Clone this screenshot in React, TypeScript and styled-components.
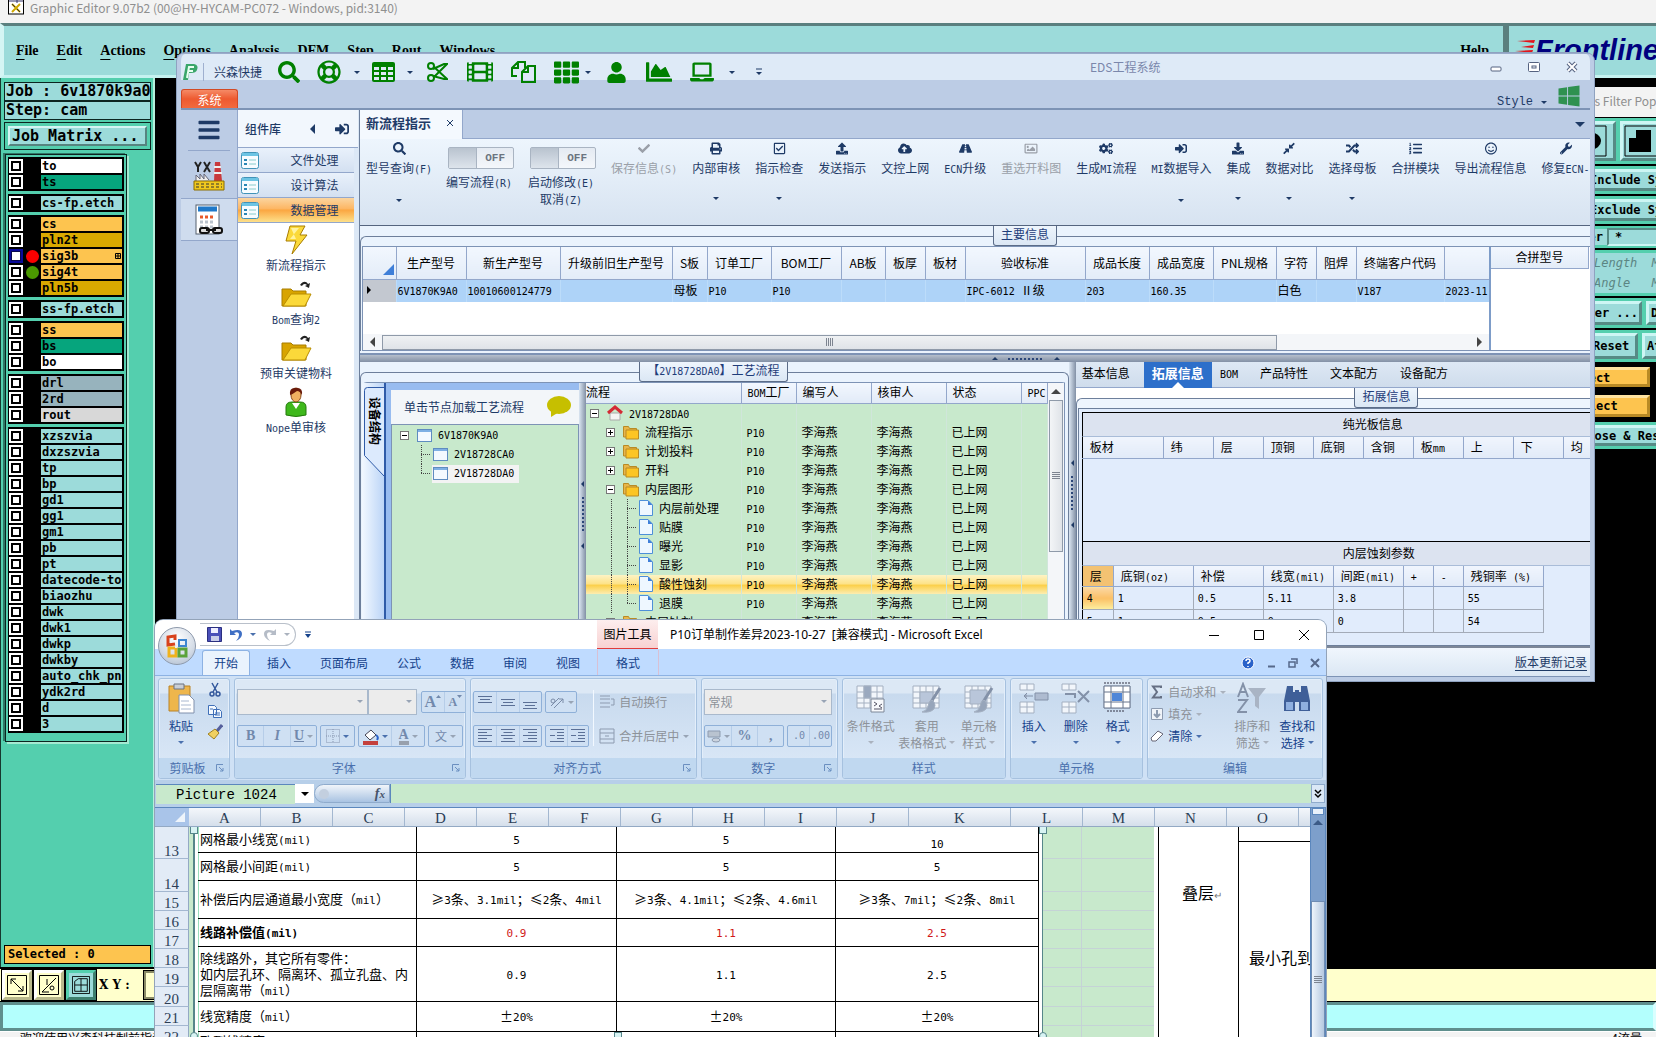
import React from 'react';
import styled, { createGlobalStyle, css } from 'styled-components';
import {
  FaSearch, FaRegLifeRing, FaFilm, FaTh, FaUser, FaChartArea, FaLaptop, FaCheck, FaPrint,
  FaRegCheckSquare, FaUpload, FaCloudUploadAlt, FaRoad, FaRegImage, FaCogs, FaSignInAlt, FaDownload,
  FaCompressAlt, FaRandom, FaListOl, FaRegSmile, FaWrench, FaWindows, FaBars,
} from 'react-icons/fa';

const GREEN = '#c8e9cc';
const NAVY = '#1e3a66';
const TEAL = '#9cdbda';
const CJK = '"Noto Sans CJK SC", sans-serif';
const MONO = '"DejaVu Sans Mono", "Liberation Mono", monospace';

const Global = createGlobalStyle`
  * { box-sizing: border-box; }
  html, body { margin: 0; padding: 0; background: #000; overflow: hidden; }
  body { font: 12px/18px ${CJK}; color: #000; }
  button, input, select { font: inherit; color: inherit; margin: 0; padding: 0; border: 0; background: none; border-radius: 0; }
  button { white-space: nowrap; }
  table { border-collapse: collapse; border-spacing: 0; table-layout: fixed; }
  th { font-weight: normal; }
  td, th { padding: 0; overflow: hidden; white-space: nowrap; }
  svg { display: block; flex: none; }
`;

/* ---------- shared pieces ---------- */

const Half = styled.span<{ $big?: boolean }>`
  font-family: ${MONO};
  font-size: ${p => (p.$big ? 11 : 10)}px;
  line-height: 1;
  white-space: pre;
`;

/* Latin runs are set at half the width of a Chinese character. */
const Mix = ({ t, big }: { t: string; big?: boolean }) => (
  <>{t.split(/([\x20-\x7e]+)/).filter(Boolean).map((s, i) =>
    /^[\x20-\x7e]+$/.test(s) ? <Half key={i} $big={big}>{s}</Half> : s)}</>
);

const Caret = styled.i<{ $c?: string; $dir?: 'up' | 'down' | 'left' | 'right'; $s?: number }>`
  display: block; flex: none; width: 0; height: 0;
  border: ${p => p.$s ?? 3}px solid transparent;
  ${p => {
    const c = p.$c ?? NAVY;
    switch (p.$dir) {
      case 'up': return `border-top: 0; border-bottom-color: ${c};`;
      case 'left': return `border-left: 0; border-right-color: ${c};`;
      case 'right': return `border-right: 0; border-left-color: ${c};`;
      default: return `border-bottom: 0; border-top-color: ${c};`;
    }
  }}
`;

const Desktop = styled.div`
  position: relative; height: 100vh; overflow: hidden; background: #000;
`;

/* ---------- graphic editor ---------- */

const Editor = styled.div`
  height: 100%; display: flex; flex-direction: column;
`;
const EditorTitle = styled.header`
  height: 23px; flex: none; display: flex; align-items: flex-start; gap: 6px; padding-left: 8px;
  background: #f3f3f3; color: #8f8f8f; font: 12px/16px ${CJK};
`;
const MenuRow = styled.div`
  height: 55px; flex: none; display: flex; background: #54cfae;
`;
const MenuBar = styled.nav`
  flex: 1; display: flex; align-items: center; gap: 18px; padding: 0 12px;
  background: ${TEAL}; border: 3px solid; border-color: #5a7f7e #5a7f7e #c5f2f0 #d5f5f4;
  border-left-width: 4px;
`;
const MenuItem = styled.button<{ $end?: boolean }>`
  font: bold 14px/20px "Liberation Serif", serif; ${p => p.$end && 'margin-left: auto; margin-right: 2px;'}
  &::first-letter { text-decoration: underline; text-underline-offset: 4px; }
`;
const Logo = styled.div`
  width: 150px; flex: none; display: flex; align-items: center; overflow: hidden; padding: 0 6px 2px;
  background: ${TEAL}; border: 3px solid; border-color: #5a7f7e #c5f2f0 #c5f2f0 #5a7f7e; border-right: 0;
  font: italic bold 29px/30px "Liberation Sans", sans-serif; color: #00007f;
`;
const EditorBody = styled.div`
  flex: 1; min-height: 0; display: flex;
`;
const LayerPane = styled.aside`
  width: 155px; flex: none; display: flex; flex-direction: column; padding: 4px 2px 3px 3px;
  background: #54cfae; border-right: 2px solid #b4f0dc; border-left: 1px solid #17382f;
`;
const InfoBox = styled.div`
  height: 19px; border: 1px solid #0c2420; background: ${TEAL}; padding-left: 1px; overflow: hidden;
  font: bold 15px/17px ${MONO}; white-space: pre;
`;
const MatrixFrame = styled.div`
  margin-top: 2px; height: 28px; padding: 3px; border: 1px solid #0c2420; background: #54cfae;
`;
const MatrixButton = styled.button`
  width: 100%; height: 20px; text-align: left; padding-left: 2px; background: ${TEAL};
  border: 2px solid; border-color: #d5f5f4 #56847f #56847f #d5f5f4; font: bold 15px/16px ${MONO};
`;
const LayerList = styled.div`
  width: 122px; height: 588px; margin: 4px 0 0 1px; padding: 2px; display: flex; flex-direction: column; gap: 3px;
  border: 1px solid #0c2420; box-shadow: 2px 2px 0 #a4ead2, -2px -1px 0 #2f7866;
`;
const LayerGroup = styled.div`
  background: #000; padding: 1px 2px 1px 1px;
`;
const Layer = styled.label<{ $bg: string }>`
  display: flex; align-items: center; height: 16px;
  span { margin-left: auto; width: 81px; height: 14px; padding-left: 1px; overflow: hidden; background: ${p => p.$bg};
    font: bold 12px/14px ${MONO}; white-space: nowrap; display: flex; align-items: center; justify-content: space-between; }
`;
const LayerTick = styled.input<{ $on?: boolean }>`
  appearance: none; width: 14px; height: 14px; background: #fff; flex: none;
  border: 2px solid ${p => (p.$on ? '#0a0a9a' : '#fff')}; box-shadow: inset 0 0 0 2px #000;
  ${p => p.$on && 'box-shadow: inset 0 0 0 1px #0a0a50;'}
`;
const Dot = styled.i<{ $c: string }>`
  width: 13px; height: 13px; margin-left: 3px; border-radius: 50%; background: ${p => p.$c};
`;
const Selected = styled.div`
  margin-top: auto; height: 19px; border: 1px solid #000; background: #fdc44f; padding-left: 3px;
  font: bold 12px/17px ${MONO}; white-space: pre;
`;
const ToolRow = styled.div`
  height: 35px; flex: none; display: flex; gap: 2px; padding: 1px 0 1px 2px; background: #ffffcc; border-top: 2px solid #000; border-bottom: 1px solid #000;
`;
const SquareButton = styled.button<{ $on?: boolean }>`
  width: 30px; height: 30px; display: grid; place-items: center; outline: 1px solid #000;
  background: ${p => (p.$on ? TEAL : '#ffffcc')};
  border: 3px solid; border-color: ${p => (p.$on ? '#54cfae #3e7f6e #3e7f6e #54cfae' : '#fff #b9b98c #b9b98c #fff')};
`;
const XY = styled.label`
  display: flex; align-items: center; gap: 14px; padding-left: 1px; font: bold 12px/16px "DejaVu Serif", serif; white-space: pre;
  input { width: 180px; height: 28px; background: #ffffcc; border: 2px solid #8a8a66; outline: 1px solid #000; }
`;
const StatusLine = styled.div`
  height: 29px; flex: none; background: #b3fffd; border: 3px solid; border-color: #5f8f8d #d9ffff #5f8f8d #5f8f8d;
`;
const Taskbar = styled.footer`
  height: 6px; flex: none; overflow: hidden; background: #f3f3f3; display: flex; justify-content: space-between;
  padding: 0 14px 0 20px; line-height: 12px; border-top: 1px solid #fff;
`;

const LAYER_GROUPS: [string, string][][] = [
  [['to', '#ffffff'], ['ts', '#06a57d']],
  [['cs-fp.etch', TEAL]],
  [['cs', '#fdc44f'], ['pln2t', '#d9a900'], ['sig3b', '#fdc44f'], ['sig4t', '#fdc44f'], ['pln5b', '#d9a900']],
  [['ss-fp.etch', TEAL]],
  [['ss', '#fdc44f'], ['bs', '#06a57d'], ['bo', '#ffffff']],
  [['drl', '#97b3bd'], ['2rd', '#97b3bd'], ['rout', '#d8d8d8']],
  ['xzszvia', 'dxzszvia', 'tp', 'bp', 'gd1', 'gg1', 'gm1', 'pb', 'pt', 'datecode-to', 'biaozhu', 'dwk', 'dwk1',
    'dwkp', 'dwkby', 'auto_chk_pnl', 'ydk2rd', 'd', '3'].map(n => [n, TEAL] as [string, string]),
];

const GraphicEditor = () => (
  <Editor>
    <EditorTitle>
      <svg width="16" height="15" viewBox="0 0 16 15"><rect x=".5" y="-2" width="15" height="16" fill="#fff" stroke="#000" /><path d="M1 1h14M9 0v3" stroke="#336" /><path d="M4 4l8 8M12 4l-8 8" stroke="#cfa800" strokeWidth="2" /><path d="M4 4l3 3M9 9l3 3" stroke="#333" /></svg>
      Graphic Editor 9.07b2 (00@HY-HYCAM-PC072 - Windows, pid:3140)
    </EditorTitle>
    <MenuRow>
      <MenuBar>
        {['File', 'Edit', 'Actions', 'Options', 'Analysis', 'DFM', 'Step', 'Rout', 'Windows'].map(m => <MenuItem key={m}>{m}</MenuItem>)}
        <MenuItem $end>Help</MenuItem>
      </MenuBar>
      <Logo>
        <svg width="20" height="24" viewBox="0 0 20 24"><path d="M2 3l18-1-1 3zM6 9l13-2-1 3zM0 13l18-1-1 3zM4 19l13-2-1 3z" fill="#e3141b" /></svg>
        Frontline
      </Logo>
    </MenuRow>
    <EditorBody>
      <LayerPane>
        <InfoBox>Job : 6v1870k9a0</InfoBox>
        <InfoBox>Step: cam</InfoBox>
        <MatrixFrame><MatrixButton>Job Matrix ...</MatrixButton></MatrixFrame>
        <LayerList>
          {LAYER_GROUPS.map((g, i) => (
            <LayerGroup key={i}>
              {g.map(([name, bg]) => (
                <Layer key={name} $bg={bg}>
                  <LayerTick type="checkbox" $on={name === 'sig3b'} />
                  {name === 'sig3b' && <Dot $c="#fb0000" />}
                  {name === 'sig4t' && <Dot $c="#4a9a00" />}
                  <span>{name}{name === 'sig3b' && <svg width="7" height="6" viewBox="0 0 7 6"><path d="M.5.5h5v5h-5zM3 0v6M0 3h6" fill="none" stroke="#000" /></svg>}</span>
                </Layer>
              ))}
            </LayerGroup>
          ))}
        </LayerList>
        <Selected>Selected : 0</Selected>
      </LayerPane>
    </EditorBody>
    <ToolRow>
      <SquareButton aria-label="Zoom"><svg width="20" height="20" viewBox="0 0 20 20" fill="none" stroke="#000"><path d="M.5.5h19v19H.5zM4 4l12 12M4 9V4h5M16 11v5h-5" /></svg></SquareButton>
      <SquareButton aria-label="Angle"><svg width="20" height="20" viewBox="0 0 20 20" fill="none" stroke="#000"><path d="M.5.5h19v19H.5zM3 17L17 3M8 4v6M3 17h7" /><circle cx="13" cy="13" r="2" /></svg></SquareButton>
      <SquareButton $on aria-label="Grid"><svg width="18" height="18" viewBox="0 0 20 20" fill="none" stroke="#000"><path d="M.5.5h19v19H.5zM3 6l4-3h10v14H3zM10 3v14M3 10h14" /></svg></SquareButton>
      <XY>X Y :<input /></XY>
    </ToolRow>
    <StatusLine />
    <Taskbar><span>欢迎使用兴森科技制前指示</span><span>4流量</span></Taskbar>
  </Editor>
);

/* ---------- filter popup ---------- */

const Popup = styled.section`
  position: absolute; right: -44px; top: 87px; width: 300px; background: #54cfae;
  display: flex; flex-direction: column; font: bold 12px/16px ${MONO};
`;
const PopupTitle = styled.header`
  height: 31px; padding-left: 152px; background: #f3f3f3; color: #8f8f8f; font: 12px/28px ${CJK}; border-bottom: 1px solid #000;
`;
const PopupRow = styled.div<{ $h: number; $dark?: boolean }>`
  height: ${p => p.$h}px; display: flex; gap: 4px; padding: 3px 0; border-bottom: 2px solid #000; white-space: nowrap;
  background: ${p => (p.$dark ? '#000' : '#54cfae')};
`;
const PopupButton = styled.button<{ $w?: number; $gold?: boolean; $pad?: number }>`
  ${p => (p.$w ? `width: ${p.$w}px; flex: none;` : 'flex: 1;')} text-align: left; padding-left: ${p => p.$pad ?? 0}px; overflow: hidden;
  background: ${p => (p.$gold ? '#fdc44f' : TEAL)};
  border: 3px solid; border-color: ${p => (p.$gold ? '#ffe3a0 #b98a25 #b98a25 #ffe3a0' : '#cdf6f4 #568a85 #568a85 #cdf6f4')};
`;
const PopupField = styled.label`
  flex: 1; display: flex; align-items: center; gap: 4px; background: ${TEAL}; padding-left: 174px;
  input { flex: 1; min-width: 0; height: 18px; border: 2px solid; border-color: #568a85 #cdf6f4 #cdf6f4 #568a85; padding-left: 6px; }
`;
const Disabled = styled.div`
  flex: 1; background: ${TEAL}; padding-left: 194px; font: italic 12px/20px ${MONO}; color: #5b8583; white-space: pre;
`;

const FilterPopup = () => (
  <Popup>
    <PopupTitle>Features Filter Popup</PopupTitle>
    <PopupRow $h={48}>
      <PopupButton $w={216} $pad={170} aria-label="Surface"><svg width="40" height="32" viewBox="0 0 40 32"><path d="M1 1h32v30H1z" fill="none" stroke="#000" /><ellipse cx="17" cy="16" rx="11" ry="9" /></svg></PopupButton>
      <PopupButton $pad={1} aria-label="Polygon"><svg width="34" height="32" viewBox="0 0 34 32"><path d="M1 1h32v30H1z" fill="none" stroke="#000" /><path d="M12 5h15v22H5V13h7z" /></svg></PopupButton>
    </PopupRow>
    <PopupRow $h={30}><PopupButton $pad={187}>Include Symbols</PopupButton></PopupRow>
    <PopupRow $h={30}><PopupButton $pad={187}>Exclude Symbols</PopupButton></PopupRow>
    <PopupRow $h={24}><PopupField>User<input defaultValue="*" /></PopupField></PopupRow>
    <PopupRow $h={48}><Disabled>{'Length  Min\nAngle   Min'}</Disabled></PopupRow>
    <PopupRow $h={32}><PopupButton $w={242} $pad={170}>Other ...</PopupButton><PopupButton $pad={2}>DCode</PopupButton></PopupRow>
    <PopupRow $h={34}><PopupButton $w={238} $pad={190}>Reset</PopupButton><PopupButton $pad={2}>Attr</PopupButton></PopupRow>
    <PopupRow $h={28} $dark><PopupButton $w={250} $gold $pad={164}>Select</PopupButton></PopupRow>
    <PopupRow $h={30} $dark><PopupButton $w={250} $gold $pad={157}>Unselect</PopupButton></PopupRow>
    <PopupRow $h={29}><PopupButton $pad={177}>Close &amp; Reset</PopupButton></PopupRow>
  </Popup>
);

/* ---------- EDS window ---------- */

const EdsWindow = styled.section`
  position: absolute; left: 177px; right: 62px; top: 53px; bottom: 356px; display: flex; flex-direction: column;
  background: #bccce5; border: 4px solid #bccce5; border-top: 1px solid #9aaccb; border-radius: 8px 8px 0 0; overflow: hidden;
  box-shadow: 0 0 0 1px #8fa2c0; color: ${NAVY};
`;
const EdsTitle = styled.header`
  height: 26px; flex: none; margin: 0 -4px; padding: 0 3px 0 4px; background: #deeaf7; display: flex; align-items: center; color: #008000;
`;
const QuickRow = styled.div`
  flex: none; align-self: flex-start; height: 36px; display: flex; align-items: center;
`;
const Brand = styled.span`
  margin: 0 12px 0 4px; padding-left: 10px; border-left: 1px solid #9fb0cf; color: ${NAVY};
`;
const QuickButton = styled.button<{ $w: number }>`
  width: ${p => p.$w}px; flex: none; display: grid; place-items: center; color: #008000;
`;
const AppName = styled.span`
  flex: 1; padding-left: 307px; color: #7a87ab; line-height: 18px; white-space: nowrap;
`;
const WinButton = styled.button`
  width: 38px; display: grid; place-items: center;
`;
const RibbonRow = styled.div`
  height: 30px; flex: none; display: flex; align-items: flex-end; border-bottom: 2px solid #7d93b5;
`;
const SystemTab = styled.button`
  width: 57px; height: 19px; color: #fff; background: linear-gradient(#f58a66, #ee5a30 50%, #f26a3e); border: 1px solid #d24a25; border-bottom: 0;
  border-radius: 3px 3px 0 0; line-height: 20px;
`;
const StyleButton = styled.button`
  margin-left: auto; display: flex; align-items: center; gap: 8px; margin-right: 10px; color: ${NAVY}; font: 12px/12px "Liberation Mono", monospace;
`;
const WindowsMark = styled(FaWindows)`
  margin-right: 9px; color: #2f9150;
`;
const EdsBody = styled.div`
  flex: 1; min-height: 0; display: flex;
`;
const NavRail = styled.nav`
  width: 57px; flex: none; display: flex; flex-direction: column; align-items: center; border-right: 1px solid #93a7cb;
`;
const RailButton = styled.button<{ $h: number; $on?: boolean }>`
  width: 100%; height: ${p => p.$h}px; display: grid; place-items: center; color: ${NAVY};
  ${p => p.$on && 'background: #cfdcee; border-top: 1px solid #93a7cb; border-bottom: 1px solid #93a7cb;'}
`;
const RailRule = styled.i`
  width: 42px; height: 1px; background: #93a7cb;
`;
const Library = styled.aside`
  width: 121px; flex: none; display: flex; flex-direction: column; background: #fff; border-right: 5px solid #dce8f6;
`;
const LibraryHead = styled.header`
  height: 38px; flex: none; margin-right: -4px; display: flex; align-items: center; padding: 0 4px 0 7px; gap: 20px; font-weight: 500; background: #f2f7fd;
  border-bottom: 1px solid #93a7cb; white-space: nowrap;
  span { margin-right: 9px; }
`;
const LibraryTab = styled.button<{ $on?: boolean }>`
  height: 25px; flex: none; display: flex; align-items: center; padding-left: 3px; border-bottom: 1px solid #93a7cb;
  background: ${p => (p.$on ? 'linear-gradient(#fbd5a0, #fdb663 45%, #fba641 50%, #fde08a)' : 'linear-gradient(#e9f1fb, #d3e0f1)')};
  span { flex: 1; padding-left: 16px; }
`;
const LibraryItem = styled.button`
  height: 54px; flex: none; display: flex; flex-direction: column; align-items: center; color: ${NAVY}; line-height: 18px; padding-top: 1px;
  svg { height: 32px; } span { line-height: 18px; }
`;
const Main = styled.main`
  flex: 1; min-width: 0; display: flex; flex-direction: column; border-left: 1px solid #6d7f9b;
`;
const DocTabs = styled.div`
  height: 29px; flex: none; display: flex; justify-content: space-between; align-items: center; padding-right: 5px; border-bottom: 1px solid #93a7cb;
`;
const DocTab = styled.div`
  width: 103px; height: 29px; display: flex; align-items: center; justify-content: space-between; padding: 0 8px 3px 6px; background: #f4f9fe;
  font-size: 13px; font-weight: bold; line-height: 20px; border-right: 1px solid #93a7cb;
`;
const Toolbar = styled.div`
  height: 87px; flex: none; display: flex; gap: 5px; padding-left: 1px; overflow: hidden; background: linear-gradient(#edf5fd, #d7e3f1);
  border-bottom: 1px solid #55657f;
`;
const Tool = styled.button<{ $off?: boolean }>`
  flex: none; display: flex; flex-direction: column; align-items: center; justify-content: flex-start; padding: 3px 5px 0; color: ${p => (p.$off ? '#9a9fa8' : NAVY)};
  svg { height: 13px; margin-bottom: 4px; } span { line-height: 18px; } i { margin-top: 20px; }
`;
const SwitchTool = styled.label`
  flex: none; display: flex; flex-direction: column; align-items: center; padding: 8px 5px 0 2px; line-height: 17px; text-align: center;
`;
const Switch = styled.span`
  position: relative; width: 66px; height: 22px; margin: 0 0 4px 4px; display: flex; align-items: center; justify-content: flex-end; padding-right: 8px;
  border: 1px solid #a9b4c2; border-radius: 2px; background: linear-gradient(#e4eaf2, #f4f7fb); color: #6c7480;
  font: bold 11px/18px "Liberation Mono", monospace;
  input { position: absolute; left: 0; top: 0; width: 28px; height: 20px; appearance: none; background: linear-gradient(#b9c3cf, #dde4ec); border-right: 1px solid #a9b4c2; }
`;
const Group = styled.fieldset`
  display: flex; flex-direction: column; min-width: 0; margin: 0; padding: 0 3px 0 1px; border: 1px solid #6d7f9b; border-radius: 6px 6px 0 0; border-bottom: 0;
`;
const OpenGroup = styled(Group)`
  border-right: 0; border-top-right-radius: 0; padding-right: 0;
`;
const GroupTitle = styled.legend<{ $at?: string }>`
  margin: 0 auto 0 ${p => p.$at ?? 'auto'}; height: 20px; padding: 0 7px; line-height: 16px; border: 1px solid #5b6c88; border-top: 0; border-radius: 0 0 3px 3px;
  background: linear-gradient(#eef5fd, #dbe7f4); color: #1f3d7a; white-space: nowrap;
`;
const InfoPane = styled.div`
  height: 129px; flex: none; background: #eaf3fd; border-bottom: 2px solid #7d93b5;
`;
const GridRow = styled.div`
  display: flex; height: 105px; border: 1px solid #7d93b5; border-right: 0;
`;
const GridMain = styled.div`
  flex: 1; min-width: 0; overflow: hidden; display: flex; flex-direction: column; background: #fff;
`;
const DataGrid = styled.table`
  width: 1126px; color: #000;
  th { height: 32px; text-align: center; background: linear-gradient(#f2f7fe, #e3ecf8); border: 1px solid #93a7cb; border-top: 0; border-left: 0; }
  td { height: 23px; padding: 0 0 1px 1px; background: #aed3f8; border-right: 1px solid #bcdcfa; }
  td:first-child { background: #c3c8d0; padding-left: 4px; }
`;
const Corner = styled.i`
  display: block; margin: 14px 2px 0 auto; width: 0; height: 0; border-left: 11px solid transparent; border-bottom: 11px solid #3f7fd8;
`;
const HScroll = styled.div`
  margin-top: auto; height: 16px; display: flex; align-items: center; padding: 0 7px; background: #f4f6f9;
  div { flex: 1; height: 15px; margin: 0 200px 0 7px; border: 1px solid #8f9aa9; background: linear-gradient(#eff1f3, #dfe3e8); display: grid; place-items: center; }
`;
const Grip = styled.i<{ $v?: boolean }>`
  width: 8px; height: 8px; background: repeating-linear-gradient(${p => (p.$v ? '180deg' : '90deg')}, #7d8490 0 1px, transparent 1px 2px);
`;
const SideGrid = styled.table`
  width: 98px; color: #000;
  th { height: 21px; background: linear-gradient(#f2f7fe, #e3ecf8); border-bottom: 1px solid #93a7cb; border-right: 1px solid #93a7cb; line-height: 20px; }
`;
const SideGridBox = styled.div`
  width: 101px; flex: none; background: #fff; border-left: 2px solid #7d9cc8;
`;
const HSplit = styled.div`
  height: 7px; flex: none; display: flex; align-items: center; justify-content: center; gap: 10px; padding-left: 102px; background: linear-gradient(#b5bfcc, #8290a5);
`;
const Dots = styled.i<{ $v?: boolean }>`
  ${p => (p.$v ? 'width: 2px; height: 36px;' : 'width: 36px; height: 2px;')}
  background: repeating-linear-gradient(${p => (p.$v ? '180deg' : '90deg')}, #2c4779 0 2px, transparent 2px 4px);
`;
const VSplit = styled.div`
  width: 7px; flex: none; display: flex; flex-direction: column; align-items: center; gap: 10px; padding-top: 98px;
  background: linear-gradient(90deg, #dbe6f2, #8290a5);
`;
const Lower = styled.div`
  flex: 1; min-height: 0; display: flex; overflow: hidden; background: #eaf3fd;
`;
const FlowGroup = styled(Group)`
  flex: 704; overflow: hidden; height: 290px;
`;
const FlowBody = styled.div`
  flex: 1; min-height: 0; display: flex; border: 1px solid #7d93b5; border-left: 0;
`;
const SideTabs = styled.div`
  position: relative; width: 22px; flex: none; background: linear-gradient(90deg, #f2f8ff, #bcd5f7);
  button { position: relative; writing-mode: vertical-rl; text-orientation: sideways; font-weight: bold; line-height: 18px; margin: 14px 0 0 4px; color: #000; }
  svg { position: absolute; left: 0; top: 0; }
`;
const DevicePane = styled.div`
  width: 195px; flex: none; display: flex; flex-direction: column; padding: 7px 0 0 5px; background: #98bcf0; border-left: 2px solid #2f5ba8;
`;
const DeviceHead = styled.div`
  height: 34px; flex: none; display: flex; align-items: center; justify-content: space-between; padding: 0 8px 0 13px; background: #f3f6f9;
`;
const DeviceTree = styled.div`
  flex: 1; border: 1px solid #7d93b5; background: ${GREEN}; padding: 1px 0 0 8px; color: #000;
`;
const TreeLine = styled.div`
  display: flex; align-items: center; height: 19px; white-space: nowrap;
`;
const TreeLabel = styled.span<{ $on?: boolean }>`
  display: flex; align-items: center; gap: 6px; height: 18px; padding: 0 5px 0 1px; ${p => p.$on && 'background: #f3f3f3;'}
`;
const Guide = styled.i<{ $k: 'none' | 'line' | 'elbow' | 'last' }>`
  width: 16px; height: 19px; flex: none;
  ${p => p.$k !== 'none' && css`
    background-image: repeating-linear-gradient(180deg, #444 0 1px, transparent 1px 2px)${p.$k !== 'line' ? ', repeating-linear-gradient(90deg, #444 0 1px, transparent 1px 2px)' : ''};
    background-size: 1px ${p.$k === 'last' ? '10px' : '19px'}, 10px 1px; background-position: 5px 0, 5px 9px; background-repeat: no-repeat;
  `}
`;
const Expander = styled.button`
  width: 16px; height: 19px; flex: none; display: flex; align-items: center;
`;
const FlowTree = styled.div`
  flex: 1; min-width: 0; overflow: hidden; background: ${GREEN};
`;
const FlowTable = styled.table`
  width: 100%; color: #000;
  th { height: 20px; text-align: left; padding: 0 0 2px 6px; line-height: 16px; background: linear-gradient(#f2f7fe, #e1eaf7); border-right: 1px solid #93a7cb; border-bottom: 1px solid #93a7cb; }
  th:first-child { padding-left: 0; }
  td { height: 19px; line-height: 18px; padding-left: 5px; border-right: 1px solid #d0e6da; }
  td:first-child { padding-left: 4px; }
`;
const FlowRow = styled.tr<{ $on?: boolean }>`
  ${p => p.$on && 'background: linear-gradient(#fdf3c4, #fde38a 45%, #fbd04c 55%, #fdedb0);'}
`;
const VScroll = styled.div`
  width: 16px; flex: none; display: flex; flex-direction: column; align-items: center; padding-top: 6px; background: #f4f6f9;
  div { width: 14px; height: 152px; margin-top: 6px; border: 1px solid #8f9aa9; background: linear-gradient(90deg, #f3f5f7, #dfe3e8); display: grid; place-items: center; }
`;
const DetailPane = styled.div`
  flex: 515; min-width: 0; display: flex; flex-direction: column; overflow: hidden; background: #fff;
`;
const DetailTabs = styled.div`
  height: 26px; flex: none; display: flex; background: linear-gradient(#dde8f4, #cfdcec); border-bottom: 1px solid #93a7cb;
`;
const DetailTab = styled.button<{ $on?: boolean; $gap?: number }>`
  position: relative; padding: 0 6px 4px; margin-left: ${p => p.$gap ?? 10}px; color: #000; height: 26px;
  ${p => p.$on && css`padding: 0 8px 4px; background: #2d6fca; color: #fff; font-weight: bold; font-size: 13px;
    &::after { content: ''; position: absolute; left: 50%; margin-left: -6px; bottom: 0; border: 6px solid transparent; border-top: 0; border-bottom-color: #fff; }`}
`;
const DetailGroup = styled(OpenGroup)`
  flex: 1; min-height: 0; background: #eef5fd;
`;
const Report = styled.div`
  flex: 1; min-height: 0; overflow: hidden; border: 1px solid #6d7f9b; border-right: 0; padding: 3px 0 0 3px; background: #e1ecfc;
`;
const ReportTable = styled.table<{ $w: number }>`
  width: ${p => p.$w}px; color: #000; border-left: 1px solid #000;
  th { height: 21px; text-align: left; padding-left: 7px; background: linear-gradient(#f0f5fd, #e1eaf8); border-right: 1px solid #93a7cb; border-bottom: 1px solid #93a7cb; line-height: 18px; }
  td { height: 23px; padding: 0 0 2px 4px; line-height: 18px; border-right: 1px solid #a3abb8; border-bottom: 1px solid #a3abb8; }
  th.key { background: #f3c272; } td.key { background: linear-gradient(#fbd7a4, #fbc066 50%, #fdf0a0); }
`;
const ReportTitle = styled.div`
  height: 25px; border-top: 1px solid #000; border-left: 1px solid #000; border-bottom: 1px solid #a9bcd8; background: #dce3f0; color: #000;
  padding-left: 260px; line-height: 22px;
`;
const ReportGap = styled.div`
  height: 82px; border-left: 1px solid #000;
`;
const EdsFooter = styled.footer`
  height: 31px; flex: none; display: flex; align-items: center; justify-content: flex-end; padding-right: 3px;
  background: linear-gradient(#f0f6fd, #dbe7f4); border-top: 2px solid #7d8798; border-bottom: 1px solid #7d93b5;
  a { color: ${NAVY}; text-underline-offset: 3px; }
`;

const COLS: [string, number, string][] = [
  ['生产型号', 70, '6V1870K9A0'], ['新生产型号', 94, '10010600124779'], ['升级前旧生产型号', 112, ''], ['S板', 35, '母板'], ['订单工厂', 64, 'P10'],
  ['BOM工厂', 70, 'P10'], ['AB板', 44, ''], ['板厚', 40, ''], ['板材', 40, ''], ['验收标准', 120, 'IPC-6012 Ⅱ级'], ['成品长度', 64, '203'],
  ['成品宽度', 64, '160.35'], ['PNL规格', 63, ''], ['字符', 40, '白色'], ['阻焊', 40, ''], ['终端客户代码', 88, 'V187'], ['', 45, '2023-11'],
];

const CopyIcon = () => (
  <svg width="25" height="24" viewBox="0 0 25 24" fill="none" stroke="#008000" strokeWidth="2"><path d="M6 16H1V8l6-6h7v6M7 2v6H1M11 22h13V6h-7l-6 6zM17 6v6h-6" /></svg>
);
const TableIcon = () => (
  <svg width="23" height="20" viewBox="0 0 23 20"><rect x="0" y="0" width="23" height="20" rx="2" fill="#008000" /><path d="M2 5h5v3H2zM9 5h5v3H9zM16 5h5v3h-5zM2 10h5v3H2zM9 10h5v3H9zM16 10h5v3h-5zM2 15h5v3H2zM9 15h5v3H9zM16 15h5v3h-5z" fill="#deeaf7" /></svg>
);
const ScissorsIcon = () => (
  <svg width="21" height="20" viewBox="0 0 21 20" fill="none" stroke="#008000" strokeWidth="2"><circle cx="4" cy="4" r="3" /><circle cx="4" cy="16" r="3" /><path d="M7 5l13 12h-3L6 14M7 15L20 2h-3L6 7" /></svg>
);

const QUICK: [string, number, React.ReactNode, boolean?][] = [
  ['搜索', 29, <FaSearch size={22} />], ['帮助', 51, <FaRegLifeRing size={24} />, true], ['表格', 47, <TableIcon />, true],
  ['剪切', 48, <ScissorsIcon />], ['影片', 38, <FaFilm size={26} />], ['复制', 48, <CopyIcon />], ['网格', 38, <FaTh size={25} />, true],
  ['用户', 51, <FaUser size={21} />], ['图表', 33, <FaChartArea size={26} />], ['电脑', 54, <FaLaptop size={24} />, true],
];

const TOOLS: { t: string; icon: React.ReactNode; caret?: boolean; off?: boolean }[] = [
  { t: '保存信息(S)', icon: <FaCheck size={12} />, off: true }, { t: '内部审核', icon: <FaPrint size={12} />, caret: true },
  { t: '指示检查', icon: <FaRegCheckSquare size={13} />, caret: true }, { t: '发送指示', icon: <FaUpload size={12} /> },
  { t: '文控上网', icon: <FaCloudUploadAlt size={14} /> }, { t: 'ECN升级', icon: <FaRoad size={13} /> },
  { t: '重选开料图', icon: <FaRegImage size={14} />, off: true }, { t: '生成MI流程', icon: <FaCogs size={14} /> },
  { t: 'MI数据导入', icon: <FaSignInAlt size={12} />, caret: true }, { t: '集成', icon: <FaDownload size={12} />, caret: true },
  { t: '数据对比', icon: <FaCompressAlt size={12} />, caret: true }, { t: '选择母板', icon: <FaRandom size={13} />, caret: true },
  { t: '合拼模块', icon: <FaListOl size={13} /> }, { t: '导出流程信息', icon: <FaRegSmile size={12} /> }, { t: '修复ECN-', icon: <FaWrench size={12} /> },
];

const FolderOpen = () => (
  <svg width="32" height="32" viewBox="0 0 32 32"><path d="M2 28V11h9l2 2h13v15z" fill="#d8a400" stroke="#a87c00" /><path d="M3 28l8-12h20l-6 12z" fill="#fbd93a" stroke="#b98d00" /><path d="M20 7c3-4 6-4 8-1l2-1-1 5-4-2 2-1c-2-2-4-1-5 1z" fill="#222" /></svg>
);
const Bolt = () => (
  <svg width="26" height="32" viewBox="0 0 26 32"><path d="M7 2h15l-5 9h7L9 30l4-13H3z" fill="#fbd93a" stroke="#a87c00" /><path d="M8 4h8L7 15h6" fill="#fff3a0" /></svg>
);
const Person = () => (
  <svg width="24" height="32" viewBox="0 0 24 32"><path d="M2 29v-8q0-5 6-5h8q6 0 6 5v8q-10 3-20 0z" fill="#3fb81c" stroke="#247a0c" /><path d="M8 17l4 6 4-6z" fill="#fff" /><ellipse cx="12" cy="9" rx="5" ry="7" fill="#f0b060" stroke="#8a4a1a" /><path d="M6 9Q5 1 12 2q7-1 6 7-2-4-5-4-4 3-7 4z" fill="#6a1a0a" /></svg>
);
const FormIcon = () => (
  <svg width="18" height="17" viewBox="0 0 18 17"><rect x=".5" y=".5" width="17" height="16" rx="2" fill="#f7fcff" stroke="#4193b8" /><path d="M1 2.500h16" stroke="#6cc4e4" strokeWidth="3" /><path d="M3 8h3M3 12h3" stroke="#2a86b4" strokeWidth="2" /><path d="M8 8h7M8 12h7" stroke="#8cc" /></svg>
);
const WindowIcon = () => (
  <svg width="15" height="13" viewBox="0 0 15 13"><rect x=".5" y=".5" width="14" height="12" fill="#f4f9ff" stroke="#5f8cc0" /><path d="M1 2h13" stroke="#7fb0e4" strokeWidth="2" /></svg>
);
const Folder = () => (
  <svg width="16" height="15" viewBox="0 0 16 15"><path d="M.5 12V1.500h5l1 2h7V12z" fill="#e8b64a" stroke="#b98a25" /><path d="M3 5h12.500v9H3z" fill="#fcc524" stroke="#b98a25" /></svg>
);
const Page = () => (
  <svg width="14" height="16" viewBox="0 0 14 16"><path d="M.5.5H9L13.500 5v10.500H.5z" fill="#eef7ff" stroke="#4d8fd8" /><path d="M9 .5V5h4.500z" fill="#3f7fd8" /></svg>
);
const House = () => (
  <svg width="16" height="16" viewBox="0 0 16 16"><path d="M3 8h10v7H3z" fill="#f4f4f4" stroke="#aaa" /><path d="M1 8l7-6 7 6" fill="none" stroke="#d42a34" strokeWidth="3" /></svg>
);
const Box = ({ plus }: { plus?: boolean }) => (
  <svg width="9" height="9" viewBox="0 0 9 9"><rect x=".5" y=".5" width="8" height="8" fill="#fff" stroke="#777" /><path d={plus ? 'M2 4.500h5M4.500 2v5' : 'M2 4.500h5'} stroke="#000" /></svg>
);
const Factory = () => (
  <svg width="32" height="32" viewBox="0 0 32 32"><path d="M2 3l3 5v5M8 3L5 8M11 3l6 10M17 3l-6 10" stroke="#222" strokeWidth="2" fill="none" /><path d="M21 22l1-19h5l2 19z" fill="#c9393c" /><path d="M21 8h7M21 14h8" stroke="#eee" strokeWidth="2" /><path d="M3 22v-6l4 4v-5l4 5v-5l5 6" stroke="#667" fill="#eee" /><path d="M1 22h30v9H1z" fill="#f0c81e" stroke="#8a6d00" /><path d="M3 25h26M3 28h26" stroke="#333" strokeDasharray="3 2" /></svg>
);
const Calculator = () => (
  <svg width="30" height="32" viewBox="0 0 30 32"><rect x="2" y="1" width="23" height="29" fill="#fff" stroke="#56606e" /><path d="M4 5h19" stroke="#1f78c8" strokeWidth="5" /><path d="M6 13h15" stroke="#e85a2a" strokeWidth="3" strokeDasharray="3 2" /><path d="M6 18h15M6 23h15" stroke="#b9c2cc" strokeWidth="3" strokeDasharray="3 2" /><g fill="#ddd" stroke="#111" strokeWidth="2"><rect x="6" y="24" width="9" height="5" rx="2" /><rect x="19" y="24" width="9" height="5" rx="2" /><path d="M12 26h10" /></g></svg>
);

const FLOW: [number, string, boolean?][] = [
  [0, '2V18728DA0'], [1, '流程指示', true], [1, '计划投料', true], [1, '开料', true], [1, '内层图形'],
  [2, '内层前处理'], [2, '贴膜'], [2, '曝光'], [2, '显影'], [2, '酸性蚀刻'], [2, '退膜'], [1, '内层蚀刻', true],
];

const Eds = () => (
  <EdsWindow>
    <EdsTitle>
      <QuickRow>
        <svg width="18" height="18" viewBox="0 0 18 18"><path d="M2 17L5 1h8q5 1 3 6-1 3-6 3H8l-1 7z" fill="#3aa66a" /><path d="M6 15L8 4h5M7 8h5" stroke="#e7fff0" strokeWidth="2" fill="none" /></svg>
        <Brand>兴森快捷</Brand>
        {QUICK.map(([name, w, icon, caret]) => (
          <React.Fragment key={name}>
            <QuickButton $w={w} aria-label={name}>{icon}</QuickButton>
            {caret && <Caret />}
          </React.Fragment>
        ))}
        <QuickButton $w={48} aria-label="更多"><svg width="8" height="8" viewBox="0 0 8 8"><path d="M1 1h6" stroke={NAVY} /><path d="M1 4h6L4 7z" fill={NAVY} /></svg></QuickButton>
      </QuickRow>
      <AppName>EDS工程系统</AppName>
      <WinButton aria-label="最小化"><svg width="12" height="12" viewBox="0 0 12 12"><rect x="1" y="6" width="10" height="4" rx="1" fill="#fff" stroke="#556280" /></svg></WinButton>
      <WinButton aria-label="最大化"><svg width="12" height="12" viewBox="0 0 12 12" fill="#fff" stroke="#556280"><rect x=".5" y="1.500" width="11" height="9" rx="1" /><rect x="4" y="5" width="4" height="2" /></svg></WinButton>
      <WinButton aria-label="关闭"><svg width="12" height="12" viewBox="0 0 12 12"><path d="M2 2l8 8M10 2l-8 8" stroke="#556280" strokeWidth="4" /><path d="M2 2l8 8M10 2l-8 8" stroke="#fff" strokeWidth="2" /></svg></WinButton>
    </EdsTitle>
    <RibbonRow>
      <SystemTab>系统</SystemTab>
      <StyleButton>Style<Caret /></StyleButton>
      <WindowsMark size={24} />
    </RibbonRow>
    <EdsBody>
      <NavRail>
        <RailButton $h={40} aria-label="菜单"><FaBars size={24} /></RailButton>
        <RailRule />
        <RailButton $h={47} aria-label="工厂"><Factory /></RailButton>
        <RailButton $h={43} $on aria-label="计算"><Calculator /></RailButton>
      </NavRail>
      <Library>
        <LibraryHead><span>组件库</span><Caret $dir="left" $s={5} /><FaSignInAlt size={14} /></LibraryHead>
        <LibraryTab><FormIcon /><span>文件处理</span></LibraryTab>
        <LibraryTab><FormIcon /><span>设计算法</span></LibraryTab>
        <LibraryTab $on><FormIcon /><span>数据管理</span></LibraryTab>
        <LibraryItem><Bolt /><span>新流程指示</span></LibraryItem>
        <LibraryItem><FolderOpen /><span><Mix t="Bom查询2" /></span></LibraryItem>
        <LibraryItem><FolderOpen /><span>预审关键物料</span></LibraryItem>
        <LibraryItem><Person /><span><Mix t="Nope单审核" /></span></LibraryItem>
      </Library>
      <Main>
        <DocTabs>
          <DocTab>新流程指示<svg width="8" height="8" viewBox="0 0 8 8"><path d="M1 1l6 6M7 1L1 7" stroke={NAVY} /></svg></DocTab>
          <Caret $s={5} />
        </DocTabs>
        <Toolbar>
          <Tool><FaSearch size={13} /><span><Mix t="型号查询(F)" /></span><Caret /></Tool>
          <SwitchTool><Switch><input type="checkbox" />OFF</Switch><span><Mix t="编写流程(R)" /></span></SwitchTool>
          <SwitchTool><Switch><input type="checkbox" />OFF</Switch><span><Mix t="启动修改(E)" /><br /><Mix t="取消(Z)" /></span></SwitchTool>
          {TOOLS.map(x => <Tool key={x.t} $off={x.off}>{x.icon}<span><Mix t={x.t} /></span>{x.caret && <Caret />}</Tool>)}
        </Toolbar>
        <InfoPane>
          <OpenGroup>
            <GroupTitle $at="calc(50% + 17px)">主要信息</GroupTitle>
            <GridRow>
              <GridMain>
                <DataGrid>
                  <colgroup><col style={{ width: 33 }} />{COLS.map((c, i) => <col key={i} style={{ width: c[1] }} />)}</colgroup>
                  <thead><tr><th><Corner /></th>{COLS.map((c, i) => <th key={i}>{c[0]}</th>)}</tr></thead>
                  <tbody><tr><td><Caret $dir="right" $c="#000" $s={4} /></td>{COLS.map((c, i) => <td key={i}><Mix t={c[2]} /></td>)}</tr></tbody>
                </DataGrid>
                <HScroll><Caret $dir="left" $c="#444" $s={5} /><div><Grip /></div><Caret $dir="right" $c="#444" $s={5} /></HScroll>
              </GridMain>
              <SideGridBox><SideGrid><thead><tr><th>合拼型号</th></tr></thead></SideGrid></SideGridBox>
            </GridRow>
          </OpenGroup>
        </InfoPane>
        <HSplit><Caret $dir="up" /><Dots /><Caret $dir="up" /></HSplit>
        <Lower>
          <FlowGroup>
            <GroupTitle><Mix t="【2V18728DA0】工艺流程" /></GroupTitle>
            <FlowBody>
              <SideTabs>
                <svg width="22" height="100" viewBox="0 0 22 100"><path d="M22 4.500H5.500q-3 0-3 3v65L22 93" fill="#dceafd" stroke="#2f5ba8" /></svg>
                <button>设备结构</button>
              </SideTabs>
              <DevicePane>
                <DeviceHead>单击节点加载工艺流程<svg width="24" height="22" viewBox="0 0 24 22"><ellipse cx="12" cy="9" rx="12" ry="9" fill="#c6bf00" /><path d="M4 12v9l8-5z" fill="#c6bf00" /></svg></DeviceHead>
                <DeviceTree>
                  <TreeLine><Expander aria-label="折叠"><Box /></Expander><TreeLabel><WindowIcon /><Half>6V1870K9A0</Half></TreeLabel></TreeLine>
                  <TreeLine><Guide $k="none" /><Guide $k="elbow" /><TreeLabel><WindowIcon /><Half>2V18728CA0</Half></TreeLabel></TreeLine>
                  <TreeLine><Guide $k="none" /><Guide $k="last" /><TreeLabel $on><WindowIcon /><Half>2V18728DA0</Half></TreeLabel></TreeLine>
                </DeviceTree>
              </DevicePane>
              <VSplit><Caret $dir="left" /><Dots $v /><Caret $dir="left" /></VSplit>
              <FlowTree>
                <FlowTable>
                  <colgroup><col style={{ width: 155 }} /><col style={{ width: 55 }} /><col style={{ width: 75 }} /><col style={{ width: 75 }} /><col style={{ width: 75 }} /><col /></colgroup>
                  <thead><tr><th>流程</th><th><Mix t="BOM工厂" /></th><th>编写人</th><th>核审人</th><th>状态</th><th><Half>PPC</Half></th></tr></thead>
                  <tbody>
                    {FLOW.map(([lv, t, plus], i) => (
                      <FlowRow key={t} $on={t === '酸性蚀刻'}>
                        <td>
                          <TreeLine>
                            {lv > 0 && <Guide $k="none" />}
                            {lv === 2 ? <><Guide $k="line" /><Guide $k={i === 10 ? 'last' : 'elbow'} /></> : <Expander aria-label="展开"><Box plus={plus} /></Expander>}
                            <TreeLabel>{lv === 0 ? <House /> : lv === 1 ? <Folder /> : <Page />}<span><Mix t={t} /></span></TreeLabel>
                          </TreeLine>
                        </td>
                        <td>{lv > 0 && <Half>P10</Half>}</td><td>{lv > 0 && '李海燕'}</td><td>{lv > 0 && '李海燕'}</td><td>{lv > 0 && '已上网'}</td><td />
                      </FlowRow>
                    ))}
                  </tbody>
                </FlowTable>
              </FlowTree>
              <VScroll><Caret $dir="up" $c="#444" $s={5} /><div><Grip $v /></div></VScroll>
            </FlowBody>
          </FlowGroup>
          <VSplit><Caret $dir="left" /><Dots $v /><Caret $dir="left" /></VSplit>
          <DetailPane>
            <DetailTabs>
              <DetailTab $gap={0}>基本信息</DetailTab><DetailTab $on $gap={8}>拓展信息</DetailTab><DetailTab $gap={2}><Half>BOM</Half></DetailTab>
              <DetailTab>产品特性</DetailTab><DetailTab>文本配方</DetailTab><DetailTab>设备配方</DetailTab>
            </DetailTabs>
            <DetailGroup>
              <GroupTitle $at="54%">拓展信息</GroupTitle>
              <Report>
                <ReportTitle>纯光板信息</ReportTitle>
                <ReportTable $w={531}>
                  <colgroup>{[81, 50, 50, 50, 50, 50, 50, 50, 50, 50].map((w, i) => <col key={i} style={{ width: w }} />)}</colgroup>
                  <thead><tr>{['板材', '纬', '层', '顶铜', '底铜', '含铜', '板mm', '上', '下', '均'].map(h => <th key={h}><Mix t={h} /></th>)}</tr></thead>
                </ReportTable>
                <ReportGap />
                <ReportTitle>内层蚀刻参数</ReportTitle>
                <ReportTable $w={461}>
                  <colgroup>{[31, 80, 70, 70, 70, 30, 30, 80].map((w, i) => <col key={i} style={{ width: w }} />)}</colgroup>
                  <thead><tr>{['层', '底铜(oz)', '补偿', '线宽(mil)', '间距(mil)', '+', '-', '残铜率 (%)'].map((h, i) => <th key={h} className={i ? '' : 'key'}><Mix t={h} /></th>)}</tr></thead>
                  <tbody>
                    <tr>{['4', '1', '0.5', '5.11', '3.8', '', '', '55'].map((v, i) => <td key={i} className={i ? '' : 'key'}><Half>{v}</Half></td>)}</tr>
                    <tr>{['5', '1', '0.5', '0', '0', '', '', '54'].map((v, i) => <td key={i}><Half>{v}</Half></td>)}</tr>
                  </tbody>
                </ReportTable>
              </Report>
            </DetailGroup>
          </DetailPane>
        </Lower>
        <EdsFooter><a href="#log">版本更新记录</a></EdsFooter>
      </Main>
    </EdsBody>
  </EdsWindow>
);

/* ---------- Excel ---------- */

const INK = '#15428b';
const ExcelWindow = styled.section`
  position: absolute; left: 155px; right: 330px; top: 620px; bottom: 0; display: flex; flex-direction: column; background: #c3d9f1;
  border-radius: 8px 8px 0 0; overflow: hidden; box-shadow: 0 0 0 1px #93a3b8;
`;
const ExcelTitle = styled.header`
  height: 29px; flex: none; display: flex; align-items: center; padding-left: 45px; background: #fff;
`;
const QuickBar = styled.div`
  width: 96px; height: 23px; display: flex; align-items: center; gap: 7px; padding-left: 7px; border: 1px solid #b9c0ca; border-left: 0; border-radius: 0 12px 12px 0;
  button { display: block; }
`;
const More = styled.button`
  margin-left: 8px; width: 12px;
`;
const Contextual = styled.div`
  width: 61px; height: 29px; margin-left: 281px; text-align: center; line-height: 28px; background: linear-gradient(#fdeeee, #f8d2d2); border-bottom: 1px solid #e03c3c;
`;
const DocName = styled.h1`
  margin: 0 auto 0 12px; font: 12px/18px "DejaVu Sans", ${CJK}; font-family: "Noto Sans", ${CJK}; white-space: pre;
`;
const SysButton = styled.button`
  width: 45px; display: grid; place-items: center; height: 29px;
`;
const Orb = styled.button`
  position: absolute; left: 3px; top: 7px; width: 38px; height: 38px; border-radius: 50%; display: grid; place-items: center; border: 1px solid #8d99ab;
  background: radial-gradient(circle at 50% 30%, #fff, #d3dbe6 60%, #aab9cc);
`;
const ExcelTabs = styled.nav`
  height: 27px; flex: none; display: flex; align-items: flex-end; padding: 0 6px 0 47px; background: #bfdbff; color: ${INK}; border-bottom: 1px solid #8db2e3;
`;
const ExcelTab = styled.button<{ $on?: boolean }>`
  height: 25px; padding: 0 12px; margin-right: 5px; line-height: 22px; border-radius: 3px 3px 0 0;
  ${p => p.$on && 'background: #eaf3fd; border: 1px solid #8db2e3; border-bottom: 0; padding: 0 11px;'}
`;
const ContextTab = styled(ExcelTab)`
  padding: 0 18px; border-left: 1px solid #d8c0d4; border-right: 1px solid #d8c0d4; border-radius: 0;
`;
const TabTools = styled.div`
  margin-left: auto; height: 25px; display: flex; align-items: center; gap: 12px;
`;
const Ribbon = styled.div`
  height: 104px; flex: none; display: flex; gap: 4px; padding: 2px 3px 1px; background: #cfe1f5; color: ${INK};
`;
const RibbonGroup = styled.section<{ $w: number }>`
  flex: ${p => p.$w} 1 0; min-width: 0; display: flex; flex-direction: column; border: 1px solid #a6c1df; border-radius: 3px; overflow: hidden;
  background: linear-gradient(#dce8f5 0 14px, #c8daee 15px, #d8e6f6 80px); box-shadow: inset 0 0 0 1px #e3eefa;
`;
const GroupBody = styled.div<{ $gap?: number }>`
  flex: 1; min-height: 0; display: flex; padding: 3px 3px 0 2px; gap: ${p => p.$gap ?? 0}px;
`;
const GroupName = styled.footer`
  height: 20px; flex: none; display: flex; align-items: center; background: #c0d8f0; color: #4a70ad;
  span { flex: 1; text-align: center; } svg { margin-right: 5px; }
`;
const BigButton = styled.button<{ $off?: boolean; $w: number }>`
  width: ${p => p.$w}px; flex: none; display: flex; flex-direction: column; align-items: center; color: ${p => (p.$off ? '#8d9299' : INK)}; line-height: 17px;
  svg { width: 30px; height: 32px; margin-bottom: 3px; }
`;
const Words = styled.span`
  display: flex; align-items: center; gap: 3px;
`;
const DropGap = styled.span`
  height: 17px; display: grid; place-items: center;
`;
const MiniColumn = styled.div<{ $gap: number }>`
  display: flex; flex-direction: column; gap: ${p => p.$gap}px;
`;
const LineStack = styled.div`
  display: flex; flex-direction: column; gap: 8px; padding-top: 7px;
`;
const Line = styled.div`
  display: flex; gap: 3px; height: 26px; align-items: center;
`;
const Cluster = styled.div<{ $w: number }>`
  width: ${p => p.$w}px; height: 22px; flex: none; display: flex; align-items: center; border: 1px solid #8fb0d8; border-radius: 2px; background: #cfe0f3; color: #7289ac;
  button { flex: 1; height: 20px; display: flex; align-items: center; justify-content: center; gap: 3px; border-right: 1px solid #b6cde8; }
  button:last-child { border-right: 0; }
`;
const SizeButton = styled.button`
  svg { align-self: flex-start; margin: 3px 0 0 -3px; }
`;
const Glyph = styled.b<{ $s?: string }>`
  font: bold 14px/20px "Liberation Serif", serif; ${p => p.$s}
`;
const Picker = styled.label<{ $w: number }>`
  position: relative; width: ${p => p.$w}px; height: 26px; flex: none; border: 1px solid #a9b9cc; background: #ececec; color: #8d9299; margin-right: -3px;
  select { width: 100%; height: 24px; appearance: none; padding-left: 3px; }
  i { position: absolute; right: 4px; top: 10px; }
  & + div { margin-left: 4px; }
`;
const Rule = styled.i`
  width: 1px; height: 56px; background: #f2f8ff; margin: 8px 5px 0 4px; flex: none;
`;
const TextButton = styled.button<{ $off?: boolean }>`
  display: flex; align-items: center; gap: 4px; height: 20px; color: ${p => (p.$off ? '#8d9299' : INK)};
`;
const FormulaBar = styled.div`
  height: 28px; flex: none; display: flex; padding: 4px 1px; background: #b7cfe9; border-bottom: 1px solid #5b87bd;
`;
const NameBox = styled.input`
  width: 139px; height: 20px; background: ${GREEN}; padding-left: 20px; font: 14px/20px "Liberation Mono", monospace; border-top: 1px solid #5b87bd;
`;
const NameDrop = styled.button`
  width: 19px; background: #fff; display: grid; place-items: center;
`;
const FxPill = styled.button`
  width: 76px; border-radius: 10px 0 0 10px; background: linear-gradient(#f1f5fa, #a9c3e2); display: flex; align-items: center; justify-content: space-between; padding: 0 4px;
  border: 1px solid #8fabcc; font: italic bold 14px/18px "Liberation Serif", serif; color: #47536a;
  i { width: 10px; height: 10px; border-radius: 50%; background: #c3cfdf; } small { font-size: 11px; }
`;
const FormulaInput = styled.input`
  flex: 1; background: ${GREEN}; border-left: 1px solid #5b87bd;
`;
const ExpandButton = styled.button`
  width: 14px; background: #dbe8f6; border: 1px solid #8fabcc; display: grid; place-items: center;
`;
const Sheet = styled.div`
  flex: 1; min-height: 0; display: flex; overflow: hidden;
`;
const SheetMain = styled.div`
  flex: 1; min-width: 0; display: flex; flex-direction: column; overflow: hidden;
`;
const ColHeads = styled.div`
  height: 19px; flex: none; display: flex; background: linear-gradient(#f4f7fb, #d5dfeb); border-bottom: 1px solid #93a9c4; font: 15px/20px "Liberation Serif", serif; color: #2c3e56;
`;
const ColHead = styled.div<{ $w: number }>`
  width: ${p => p.$w}px; flex: none; text-align: center; border-right: 1px solid #a3b7d0;
`;
const SelectAll = styled.button`
  width: 34px; flex: none; background: #a9c4e9; display: flex; justify-content: flex-end; align-items: flex-end; padding: 4px;
  i { border-left: 10px solid transparent; border-bottom: 10px solid #eef4fb; }
`;
const SheetBody = styled.div`
  position: relative; flex: 1; min-height: 0; display: flex; overflow: hidden; background: ${GREEN};
`;
const RowHeads = styled.div`
  width: 34px; flex: none; background: #e2ebf6;
`;
const RowHead = styled.div<{ $h: number }>`
  height: ${p => p.$h}px; display: flex; align-items: flex-end; justify-content: center; border-bottom: 1px solid #a3b7d0; border-right: 1px solid #93a9c4;
  font: 15px/14px "Liberation Serif", serif; color: #2c3e56; overflow: hidden;
`;
const Picture = styled.div`
  flex: none; margin-left: 4px; width: 850px; padding: 0 5px 0 3px; background: #fff; border: solid #56868a; border-width: 0 1px 0 2px;
`;
const PicTable = styled.table`
  width: 840px; font-size: 13px; line-height: 16px;
  td { border: 1px solid #000; border-top: 0; text-align: center; white-space: normal; }
  td:first-child { text-align: left; padding-left: 1px; border-left: 1px solid #9db; }
`;
const PicRow = styled.tr<{ $h: number; $tone?: boolean; $low?: boolean }>`
  height: ${p => p.$h}px; ${p => p.$tone && 'color: #d01818;'}
  td:first-child { color: #000; ${p => p.$tone && 'font-weight: bold;'} }
  ${p => p.$low && 'td:last-child { padding-top: 8px; }'}
`;
const GreenCells = styled.div`
  width: 111px; flex: none; display: flex; flex-direction: column;
`;
const GreenRow = styled.div<{ $h: number }>`
  height: ${p => p.$h}px; flex: none; border-bottom: 1px solid #c5d3d6; display: flex;
  &::before { content: ''; width: 38px; border-right: 1px solid #c5d3d6; }
`;
const SidePicture = styled.div`
  flex: 1; display: flex; background: #fff; padding-left: 4px; font-size: 16px; line-height: 24px; white-space: nowrap;
`;
const StackCell = styled.div`
  width: 81px; flex: none; border: solid #000; border-width: 0 1px; text-align: center; padding: 53px 0 0 7px;
  small { font-size: 10px; color: #777; }
`;
const HoleCell = styled.div`
  flex: 1; min-width: 0; overflow: hidden; padding-left: 10px;
  &::before { content: ''; display: block; height: 14px; margin: 0 0 103px -10px; border-bottom: 1px solid #000; }
`;
const Handle = styled.i<{ $x: number; $y: number; $round?: boolean }>`
  position: absolute; left: ${p => p.$x}px; top: ${p => p.$y}px; width: 8px; height: 8px; background: #d8f3f3; border: 1px solid #56868a; ${p => p.$round && 'border-radius: 50%;'}
`;
const SheetScroll = styled.div`
  width: 16px; flex: none; display: flex; flex-direction: column; align-items: center; background: #7d9fcb; border: solid #5b87bd; border-width: 0 1px;
`;
const SplitBox = styled.div`
  width: 12px; height: 7px; background: #e8f1fb; border: 1px solid #5b87bd; margin-bottom: 5px;
`;
const SheetThumb = styled.div`
  width: 14px; flex: 1; margin-top: 76px; background: linear-gradient(90deg, #eef4fb, #b5c8e0); border: 1px solid #6f8cb3; border-bottom: 0; padding: 74px 2px 0;
  i { display: block; }
`;

const G = '#8d9bb0';
const lines = (ws: number[], y: number, x: 'l' | 'c' | 'r' = 'l') =>
  ws.map((w, i) => { const s = x === 'l' ? 0 : x === 'c' ? (14 - w) / 2 : 14 - w; return `M${s} ${y + i * 3}h${w}`; }).join('');
const LinesIcon = ({ d }: { d: string }) => <svg width="14" height="14" viewBox="0 0 14 14"><path d={d} stroke="#5b7096" /></svg>;
const Launcher = () => <svg width="8" height="8" viewBox="0 0 8 8"><path d="M7 .5H.5V7M3 3l4 4M7 4v3H4" stroke="#6b8fc0" fill="none" /></svg>;
const SheetIcon = ({ k }: { k: 'cond' | 'brush' | 'cell' | 'ins' | 'del' | 'fmt' }) => (
  <svg viewBox="0 0 30 32" fill="none" stroke="#a4b0c1">
    {(k === 'ins' || k === 'del') ? (
      <><path d="M1 2h14v6H1zM8 2v6M1 20h14v11H1zM8 20v11M1 25h14" fill="#f2f6fb" />{k === 'ins' ? <path d="M16 11h13v7H16zM5 14h9M8 11l-3 3 3 3" fill="#aebbd0" stroke="#8391a8" /> : <path d="M17 9l11 11M28 9L17 20M4 12h10v4" stroke="#8391a8" strokeWidth="2" />}</>
    ) : (
      <><path d="M1 4h26v22H1zM1 10h26M1 16h26M1 21h26M8 4v22M14 4v22M21 4v22" fill="#f2f6fb" />
        {k === 'cond' && <><path d="M8 4h7v12H8z" fill="#9aa9bf" /><path d="M15 17h13v13H15z" fill="#f7f9fc" stroke="#7c8798" /><path d="M18 20l3 2-3 2M26 22l-3 2 3 2M18 27h8" stroke="#556" /></>}
        {(k === 'brush' || k === 'cell') && <><path d={k === 'cell' ? 'M6 8h17v14H6z' : 'M8 10h13v11H8z'} fill="#b9c6da" /><path d="M28 6l-9 14" stroke="#8391a8" strokeWidth="3" /><path d="M20 18q-3 0-4 6-1 5-6 6 8 1 12-3 2-4 0-7z" fill="#97a5ba" /></>}
        {k === 'fmt' && <><path d="M1 4h26v22H1zM1 10h26M1 20h26M8 4v22M20 4v22" fill="#fff" stroke="#66748c" /><path d="M9 11h10v8H9z" fill="#4f86d8" stroke="none" /><path d="M1 1h26M4 29h18" stroke="#334" strokeDasharray="2 1" /></>}</>
    )}
  </svg>
);
const ROW_H = [32, 33, 19, 19, 19, 19, 19, 20, 19, 19];

const Excel = () => (
  <ExcelWindow>
    <ExcelTitle>
      <QuickBar>
        <button aria-label="保存"><svg width="15" height="15" viewBox="0 0 15 15"><path d="M.5.5h14v14H.5z" fill="#4a4fb8" stroke="#2a2f80" /><path d="M4 1h7v5H4z" fill="#eef" /><path d="M4 9h8v5H4z" fill="#c9cde8" /></svg></button>
        <button aria-label="撤销"><svg width="14" height="14" viewBox="0 0 14 14"><path d="M1 1v6h6L5 5q5-2 5 2 0 3-3 6 6-3 6-7 0-6-10-3z" fill="#3f6fc4" /></svg></button>
        <Caret $c="#4a70ad" />
        <button aria-label="重做"><svg width="14" height="14" viewBox="0 0 14 14"><path d="M13 1v6H7l2-2Q4 3 4 7q0 3 3 6-6-3-6-7 0-6 10-3z" fill="#b5bcc7" /></svg></button>
        <Caret $c="#aab2be" />
      </QuickBar>
      <More aria-label="更多"><svg width="8" height="8" viewBox="0 0 8 8"><path d="M1 1h6" stroke={INK} /><path d="M1 3h6L4 7z" fill={INK} /></svg></More>
      <Contextual>图片工具</Contextual>
      <DocName>{'P10订单制作差异2023-10-27  [兼容模式] - Microsoft Excel'}</DocName>
      <SysButton aria-label="最小化"><svg width="12" height="12" viewBox="0 0 12 12"><path d="M1 6.500h10" stroke="#000" /></svg></SysButton>
      <SysButton aria-label="最大化"><svg width="12" height="12" viewBox="0 0 12 12"><path d="M1.500 1.500h9v9h-9z" fill="none" stroke="#000" /></svg></SysButton>
      <SysButton aria-label="关闭"><svg width="12" height="12" viewBox="0 0 12 12"><path d="M1 1l10 10M11 1L1 11" stroke="#000" /></svg></SysButton>
    </ExcelTitle>
    <ExcelTabs>
      <ExcelTab $on>开始</ExcelTab>
      {['插入', '页面布局', '公式', '数据', '审阅', '视图'].map(t => <ExcelTab key={t}>{t}</ExcelTab>)}
      <ContextTab>格式</ContextTab>
      <TabTools>
        <button aria-label="帮助"><svg width="14" height="14" viewBox="0 0 14 14"><circle cx="7" cy="7" r="6" fill="#2a62c9" stroke="#fff" /><path d="M5 5q0-2 2-2t2 2q0 1-2 2v1M7 10v1" stroke="#fff" strokeWidth="1.500" fill="none" /></svg></button>
        <svg width="9" height="10" viewBox="0 0 9 10"><path d="M1 8.500h7" stroke="#56688a" strokeWidth="2" /></svg>
        <svg width="10" height="10" viewBox="0 0 10 10"><path d="M3 1h6v5M1 4h6v5H1z" stroke="#56688a" fill="none" strokeWidth="1.500" /></svg>
        <svg width="10" height="10" viewBox="0 0 10 10"><path d="M1 1l8 8M9 1L1 9" stroke="#56688a" strokeWidth="2" /></svg>
      </TabTools>
    </ExcelTabs>
    <Orb aria-label="Office"><svg width="26" height="26" viewBox="0 0 26 26" fill="none" strokeWidth="3"><path d="M11 7V3L4 4v8l7-1" stroke="#d8421c" /><path d="M15 7h7v6h-7z" stroke="#3f86d0" strokeWidth="2" /><path d="M11 15H5v8h7v-8" stroke="#f0b21c" /><path d="M15 16h7v7h-7z" stroke="#5aa33a" /></svg></Orb>
    <Ribbon>
      <RibbonGroup $w={71}>
        <GroupBody $gap={6}>
          <BigButton $w={40}><svg viewBox="0 0 30 32"><path d="M3 4h21v25H3z" fill="#eeb64c" stroke="#b98225" /><path d="M8 2h10v5H8z" fill="#c9ced6" stroke="#6a7280" /><path d="M13 13h10l5 5v13H13z" fill="#fff" stroke="#8090ac" /><path d="M15 19h8M15 23h10M15 27h10" stroke="#a9b8d0" /></svg>粘贴<DropGap><Caret $c="#4a70ad" /></DropGap></BigButton>
          <MiniColumn $gap={5}>
            <button aria-label="剪切"><svg width="16" height="16" viewBox="0 0 16 16" fill="none" stroke="#33589c" strokeWidth="1.500"><path d="M5 1l5 9M11 1L6 10" /><circle cx="5" cy="12" r="2" /><circle cx="11" cy="12" r="2" /></svg></button>
            <button aria-label="复制"><svg width="16" height="16" viewBox="0 0 16 16" fill="#f4f9ff" stroke="#3f6fb8"><path d="M1.500 2.500h6l2 2v7h-8zM6.500 6.500h6l2 2v6h-8z" /><path d="M8 10h5M8 12h5M3 6h3" /></svg></button>
            <button aria-label="格式刷"><svg width="16" height="16" viewBox="0 0 16 16"><path d="M15 1l-5 6" stroke="#555f9c" strokeWidth="3" /><path d="M8 5l4 4-5 6-6-5z" fill="#f0d060" stroke="#a08020" /></svg></button>
          </MiniColumn>
        </GroupBody>
        <GroupName><span>剪贴板</span><Launcher /></GroupName>
      </RibbonGroup>
      <RibbonGroup $w={233}>
        <GroupBody>
          <LineStack>
            <Line>
              <Picker $w={131} aria-label="字体"><select><option /></select><Caret $c="#98a4b5" /></Picker>
              <Picker $w={49} aria-label="字号"><select><option /></select><Caret $c="#98a4b5" /></Picker>
              <Cluster $w={46}>
                <SizeButton><Glyph $s="font-size: 16px;">A</Glyph><svg width="5" height="3" viewBox="0 0 5 3"><path d="M0 3h5L2.500 0z" fill="#7289ac" /></svg></SizeButton>
                <SizeButton><Glyph $s="font-size: 12px;">A</Glyph><svg width="5" height="3" viewBox="0 0 5 3"><path d="M0 0h5L2.500 3z" fill="#7289ac" /></svg></SizeButton>
              </Cluster>
            </Line>
            <Line>
              <Cluster $w={80}><button><Glyph>B</Glyph></button><button><Glyph $s="font-style: italic;">I</Glyph></button><button><Glyph $s="text-decoration: underline;">U</Glyph><Caret $c="#98a4b5" /></button></Cluster>
              <Cluster $w={35}><button aria-label="边框"><svg width="14" height="14" viewBox="0 0 14 14"><path d="M.5.5h13v13H.5zM7 0v14M0 7h14" fill="none" stroke="#8796b0" strokeDasharray="1 1" /></svg><Caret $c="#4a70ad" /></button></Cluster>
              <Cluster $w={67}>
                <button aria-label="填充颜色"><svg width="17" height="17" viewBox="0 0 17 17"><path d="M3 7l6-5 5 5-6 5z" fill="#fff" stroke="#445" /><path d="M14 7q3 2 1 5" stroke="#2a62c9" strokeWidth="2" fill="none" /><path d="M1 13h15v4H1z" fill="#c4403c" /></svg><Caret $c="#4a70ad" /></button>
                <button><Glyph $s="border-bottom: 4px solid #98a0ac; line-height: 13px;">A</Glyph><Caret $c="#98a4b5" /></button>
              </Cluster>
              <Cluster $w={35}><button aria-label="拼音">文<Caret $c="#98a4b5" /></button></Cluster>
            </Line>
          </LineStack>
        </GroupBody>
        <GroupName><span>字体</span><Launcher /></GroupName>
      </RibbonGroup>
      <RibbonGroup $w={228}>
        <GroupBody>
          <LineStack>
            <Line>
              <Cluster $w={69}><button aria-label="顶端对齐"><LinesIcon d={lines([14, 10, 14], 1.5, 'c')} /></button><button aria-label="垂直居中"><LinesIcon d={lines([14, 10, 14], 4.5, 'c')} /></button><button aria-label="底端对齐"><LinesIcon d={lines([14, 10, 14], 7.5, 'c')} /></button></Cluster>
              <Cluster $w={32}><button aria-label="方向"><svg width="16" height="14" viewBox="0 0 16 14"><path d="M2 11l8-8M5 13l9-9M10 4h4v4" stroke="#7b8ca8" fill="none" /><circle cx="4" cy="6" r="2" fill="none" stroke="#7b8ca8" /></svg><Caret $c="#98a4b5" /></button></Cluster>
            </Line>
            <Line>
              <Cluster $w={69}><button aria-label="左对齐"><LinesIcon d={lines([14, 9, 14, 9, 14], 0.5)} /></button><button aria-label="居中"><LinesIcon d={lines([14, 9, 14, 9, 14], 0.5, 'c')} /></button><button aria-label="右对齐"><LinesIcon d={lines([14, 9, 14, 9, 14], 0.5, 'r')} /></button></Cluster>
              <Cluster $w={44}><button aria-label="减少缩进"><LinesIcon d={lines([14, 7, 7, 7, 14], 0.5, 'r') + 'M0 6.500h5'} /></button><button aria-label="增加缩进"><LinesIcon d={lines([14, 7, 7, 7, 14], 0.5, 'r') + 'M0 6.500h5'} /></button></Cluster>
            </Line>
          </LineStack>
          <Rule />
          <LineStack>
            <Line><TextButton $off><svg width="16" height="16" viewBox="0 0 16 16" fill="none" stroke={G}><path d="M1 2h10M1 5h10M1 9h10M1 13h10M12 5h3v6h-3" /></svg>自动换行</TextButton></Line>
            <Line><TextButton $off><svg width="16" height="16" viewBox="0 0 16 16" fill="none" stroke={G}><path d="M1 1h14v14H1zM1 5h14M1 11h14M6 8h4" /></svg>合并后居中<Caret $c="#98a4b5" /></TextButton></Line>
          </LineStack>
        </GroupBody>
        <GroupName><span>对齐方式</span><Launcher /></GroupName>
      </RibbonGroup>
      <RibbonGroup $w={136}>
        <GroupBody>
          <LineStack>
            <Line><Picker $w={128} aria-label="数字格式"><select><option>常规</option></select><Caret $c="#98a4b5" /></Picker></Line>
            <Line>
              <Cluster $w={80}><button aria-label="会计数字格式"><svg width="14" height="14" viewBox="0 0 14 14"><path d="M1 2h12v6H1z" fill="#b9c3d0" stroke={G} /><ellipse cx="9" cy="11" rx="4" ry="2" fill="#ccd4df" stroke={G} /></svg><Caret $c="#98a4b5" /></button><button><Glyph>%</Glyph></button><button><Glyph>,</Glyph></button></Cluster>
              <Cluster $w={45}><button aria-label="增加小数位数"><Half>.0</Half></button><button aria-label="减少小数位数"><Half>.00</Half></button></Cluster>
            </Line>
          </LineStack>
        </GroupBody>
        <GroupName><span>数字</span><Launcher /></GroupName>
      </RibbonGroup>
      <RibbonGroup $w={164}>
        <GroupBody>
          <BigButton $off $w={52}><SheetIcon k="cond" />条件格式<DropGap><Caret $c="#aab2be" /></DropGap></BigButton>
          <BigButton $off $w={60}><SheetIcon k="brush" />套用<Words>表格格式<Caret $c="#aab2be" /></Words></BigButton>
          <BigButton $off $w={44}><SheetIcon k="cell" />单元格<Words>样式<Caret $c="#aab2be" /></Words></BigButton>
        </GroupBody>
        <GroupName><span>样式</span></GroupName>
      </RibbonGroup>
      <RibbonGroup $w={133}>
        <GroupBody>
          <BigButton $w={42}><SheetIcon k="ins" />插入<DropGap><Caret $c="#4a70ad" /></DropGap></BigButton>
          <BigButton $w={42}><SheetIcon k="del" />删除<DropGap><Caret $c="#4a70ad" /></DropGap></BigButton>
          <BigButton $w={42}><SheetIcon k="fmt" />格式<DropGap><Caret $c="#4a70ad" /></DropGap></BigButton>
        </GroupBody>
        <GroupName><span>单元格</span></GroupName>
      </RibbonGroup>
      <RibbonGroup $w={176}>
        <GroupBody $gap={6}>
          <MiniColumn $gap={2}>
            <TextButton $off><svg width="14" height="14" viewBox="0 0 14 14"><path d="M11 3V1.500H3L7 7l-4 5.500h8V11" fill="none" stroke="#667084" strokeWidth="2" /></svg>自动求和<Caret $c="#aab2be" /></TextButton>
            <TextButton $off><svg width="14" height="14" viewBox="0 0 14 14"><path d="M1.500 1.500h11v11h-11z" fill="#f0f4f9" stroke={G} /><path d="M7 3v7M4 7l3 3 3-3" stroke={G} strokeWidth="2" fill="none" /></svg>填充<Caret $c="#aab2be" /></TextButton>
            <TextButton><svg width="14" height="14" viewBox="0 0 14 14"><path d="M1 9l7-7 5 3-7 7H2z" fill="#fff" stroke="#667" /></svg>清除<Caret $c="#4a70ad" /></TextButton>
          </MiniColumn>
          <BigButton $off $w={40}><svg viewBox="0 0 30 32"><path d="M1 15L6 2l5 13M3 10h6M1 18h9L1 30h9" fill="none" stroke="#8391a8" strokeWidth="2" /><path d="M11 6h18l-7 9v12l-4-3v-9z" fill="#a9b4c4" /></svg>排序和<Words>筛选<Caret $c="#aab2be" /></Words></BigButton>
          <BigButton $w={38}><svg viewBox="0 0 30 32"><path d="M5 4h6v6h2V8h4v2h2V4h6l3 15v10H17v-9h-4v9H2V19z" fill="#3f5f98" /><path d="M4 20h7v8H4zM19 20h7v8h-7z" fill="#8fb0e0" /></svg>查找和<Words>选择<Caret $c="#4a70ad" /></Words></BigButton>
        </GroupBody>
        <GroupName><span>编辑</span></GroupName>
      </RibbonGroup>
    </Ribbon>
    <FormulaBar>
      <NameBox aria-label="名称框" defaultValue="Picture 1024" />
      <NameDrop aria-label="名称列表"><Caret $c="#000" $s={4} /></NameDrop>
      <FxPill><i /><span>f<small>x</small></span></FxPill>
      <FormulaInput aria-label="编辑栏" />
      <ExpandButton aria-label="展开编辑栏"><svg width="8" height="10" viewBox="0 0 8 10"><path d="M1 1l3 3 3-3M1 5l3 3 3-3" stroke="#000" fill="none" strokeWidth="1.500" /></svg></ExpandButton>
    </FormulaBar>
    <Sheet>
      <SheetMain>
        <ColHeads>
          <SelectAll aria-label="全选"><i /></SelectAll>
          {'ABCDEFGHIJKLMNO'.split('').map(c => <ColHead key={c} $w={c === 'K' ? 102 : 72}>{c}</ColHead>)}
        </ColHeads>
        <SheetBody>
          <RowHeads>{ROW_H.map((h, i) => <RowHead key={i} $h={h}>{13 + i}</RowHead>)}</RowHeads>
          <Picture>
            <PicTable>
              <colgroup><col style={{ width: 218 }} /><col style={{ width: 200 }} /><col style={{ width: 219 }} /><col style={{ width: 203 }} /></colgroup>
              <tbody>
                {([
                  [25, '网格最小线宽(mil)', '5', '5', '10'],
                  [28, '网格最小间距(mil)', '5', '5', '5'],
                  [38, '补偿后内层通道最小宽度（mil）', '≥3条、3.1mil；≤2条、4mil', '≥3条、4.1mil；≤2条、4.6mil', '≥3条、7mil；≤2条、8mil'],
                  [28, '线路补偿值(mil)', '0.9', '1.1', '2.5'],
                  [55, '除线路外，其它所有零件：\n如内层孔环、隔离环、孤立孔盘、内层隔离带（mil）', '0.9', '1.1', '2.5'],
                  [30, '线宽精度（mil）', '±20%', '±20%', '±20%'],
                  [20, '孔到线精度', '', '', ''],
                ] as [number, ...string[]][]).map(([h, ...cells], i) => (
                  <PicRow key={i} $h={h} $tone={i === 3} $low={i === 0}>
                    {cells.map((c, j) => <td key={j}>{c.split('\n').map((s, k) => <React.Fragment key={k}>{k > 0 && <br />}<Mix t={s} big /></React.Fragment>)}</td>)}
                  </PicRow>
                ))}
              </tbody>
            </PicTable>
          </Picture>
          <GreenCells>{ROW_H.map((h, i) => <GreenRow key={i} $h={h} />)}</GreenCells>
          <SidePicture><StackCell>叠层<small>↵</small></StackCell><HoleCell>最小孔到</HoleCell></SidePicture>
          <Handle $x={35} $y={-1} /><Handle $x={884} $y={-1} /><Handle $x={35} $y={205} $round /><Handle $x={459} $y={205} /><Handle $x={884} $y={205} $round />
        </SheetBody>
      </SheetMain>
      <SheetScroll><SplitBox /><Caret $dir="up" $c="#3b5a86" $s={5} /><SheetThumb><Grip $v /></SheetThumb></SheetScroll>
    </Sheet>
  </ExcelWindow>
);

export default function App() {
  return (
    <>
      <Global />
      <Desktop>
        <GraphicEditor />
        <FilterPopup />
        <Eds />
        <Excel />
      </Desktop>
    </>
  );
}
